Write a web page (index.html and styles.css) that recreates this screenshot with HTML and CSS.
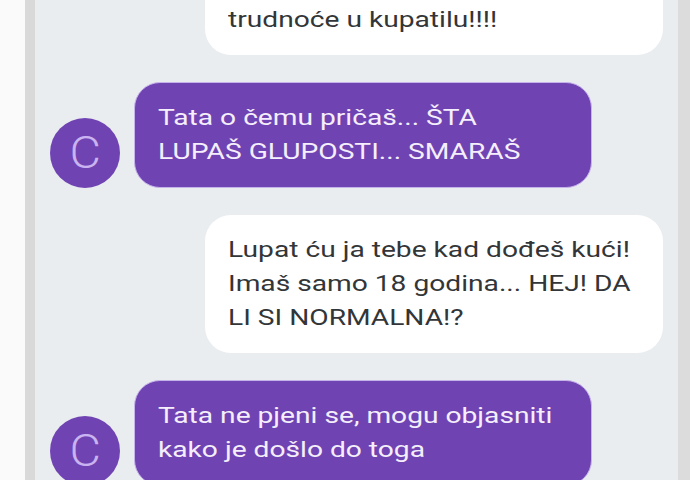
FILE: index.html
```
<!DOCTYPE html>
<html lang="bs">
<head>
    <meta charset="UTF-8">
    <meta name="viewport" content="width=device-width, initial-scale=1.0">
    <title>Poruke</title>
    <link rel="stylesheet" href="styles.css">
</head>
<body>
    <div class="frame">
        <div class="edge-left"></div>
        <div class="edge-strip"></div>

        <main class="chat">
            <div class="thread">
                <!-- poruka od tate -->
                <div class="row row-out">
                    <div class="bubble bubble-out">
                        <span class="text">Kćeri, jel ovo tvoj pozitivni test<br>trudnoće u kupatilu!!!!</span>
                    </div>
                </div>

                <div class="row row-in">
                    <div class="avatar"><span class="letter">C</span></div>
                    <div class="bubble bubble-in">
                        <span class="text">Tata o čemu pričaš... ŠTA<br>LUPAŠ GLUPOSTI... SMARAŠ</span>
                    </div>
                </div>

                <div class="row row-out">
                    <div class="bubble bubble-out">
                        <span class="text">Lupat ću ja tebe kad dođeš kući!<br>Imaš samo 18 godina... HEJ! DA<br>LI SI NORMALNA!?</span>
                    </div>
                </div>

                <div class="row row-in">
                    <div class="avatar"><span class="letter">C</span></div>
                    <div class="bubble bubble-in">
                        <span class="text">Tata ne pjeni se, mogu objasniti<br>kako je došlo do toga</span>
                    </div>
                </div>
            </div>
        </main>

        <div class="edge-right"></div>
    </div>
</body>
</html>
```

FILE: styles.css
```
* {
    box-sizing: border-box;
    margin: 0;
    padding: 0;
}

body {
    font-family: Roboto, 'Noto Sans', 'Liberation Sans', sans-serif;
    background: #fafafa;
    width: 690px;
    height: 480px;
    overflow: hidden;
}

.frame {
    display: flex;
    height: 480px;
}

.edge-left {
    width: 25px;
    background: #fafafa;
}

.edge-strip {
    width: 10px;
    background: #d9d9d9;
}

.edge-right {
    width: 12px;
    background: #dcdcdc;
}

.chat {
    flex: 1;
    background: #e9edf0;
    overflow: hidden;
}

.thread {
    display: flex;
    flex-direction: column;
    gap: 27px;
    margin-top: -49px;
}

.row {
    display: flex;
    align-items: flex-end;
}

.row-out {
    justify-content: flex-end;
    padding-right: 15px;
}

.row-in {
    padding-left: 15px;
    gap: 14px;
}

.bubble {
    width: 458px;
    padding: 18px 23px;
    border-radius: 26px;
    font-size: 22px;
    line-height: 34px;
}

/* the screenshot is stretched sideways, so the text is too */
.text {
    display: inline-block;
    white-space: nowrap;
    transform: scaleX(1.28);
    transform-origin: left center;
}

.bubble-out {
    background: #ffffff;
    color: #333638;
}

.bubble-in {
    background: #7043b2;
    color: #f5effd;
    border: 1px solid #c7b3ec;
}

.avatar {
    width: 70px;
    height: 70px;
    flex-shrink: 0;
    border-radius: 50%;
    background: #7043b2;
    color: #c9b3f1;
    font-size: 44px;
    font-weight: 300;
    display: flex;
    justify-content: center;
    align-items: center;
}

.letter {
    display: inline-block;
    transform: scaleX(1.1);
}
```
